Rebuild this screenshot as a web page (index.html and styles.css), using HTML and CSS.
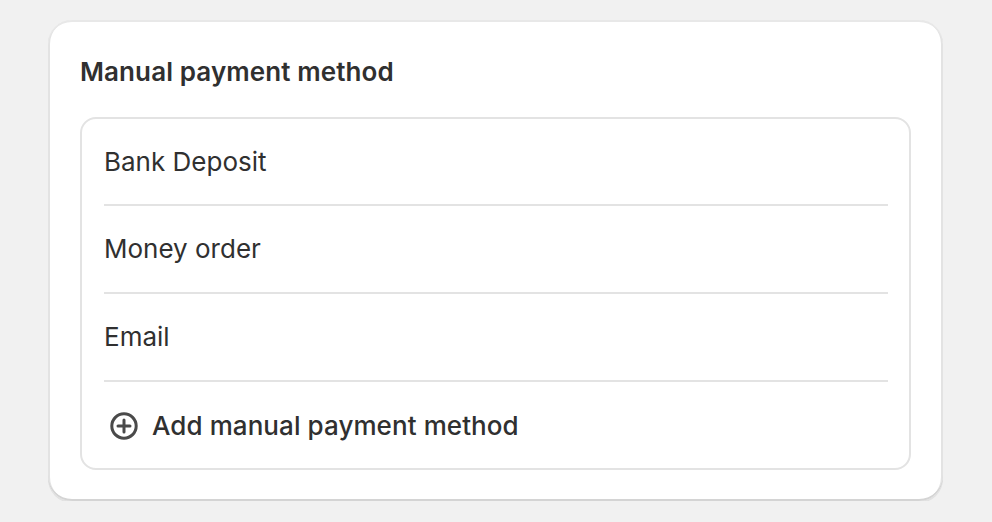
FILE: index.html
```html
<!DOCTYPE html>
<html lang="en">
<head>
<meta charset="utf-8">
<title>Manual payment method</title>
<link rel="stylesheet" href="styles.css">
</head>
<body>
<div class="page">
  <section class="card">
    <h2 class="card-title">Manual payment method</h2>
    <div class="list">
      <div class="row"><span class="row-text">Bank Deposit</span></div>
      <div class="row"><span class="row-text">Money order</span></div>
      <div class="row"><span class="row-text">Email</span></div>
      <div class="row row-add">
        <span class="icon">
          <svg viewBox="0 0 20 20" width="40" height="40" aria-hidden="true">
            <circle cx="10" cy="10" r="6.1" fill="none" stroke="#4a4a4a" stroke-width="1.5"/>
            <path d="M7 10h6M10 7v6" stroke="#4a4a4a" stroke-width="1.5" stroke-linecap="round" fill="none"/>
          </svg>
        </span>
        <span class="add-text">Add manual payment method</span>
      </div>
    </div>
  </section>
</div>
</body>
</html>
```
FILE: styles.css
```css
html, body {
  margin: 0;
  padding: 0;
  background: #f1f1f1;
}
body {
  font-family: Inter, "Noto Sans", sans-serif;
  color: #303030;
}
.page {
  padding: 20px 49px 0 48px;
}
.card {
  background: #ffffff;
  border-radius: 24px;
  padding: 32px 32px 31px 32px;
  box-shadow:
    0 2px 0 0 rgba(26, 26, 26, 0.07),
    inset 0 -2px 0 0 #d4d4d4,
    inset 0 2px 0 0 #e8e8e8,
    inset 2px 0 0 0 #e3e3e3,
    inset -2px 0 0 0 #e3e3e3;
}
.card-title {
  margin: 0 0 25px 0;
  font-size: 26px;
  line-height: 40px;
  font-weight: 600;
  letter-spacing: 0.1px;
  color: #303030;
}
.list {
  border: 2px solid #e3e3e3;
  border-radius: 16px;
  padding: 0 21px 0 22px;
}
.row {
  display: flex;
  align-items: center;
  height: 86px;
  border-bottom: 2px solid #e3e3e3;
}
.row:first-child {
  height: 85px;
}
.row-text {
  font-size: 26px;
  line-height: 40px;
  font-weight: 400;
}
.row-add {
  border-bottom: none;
  height: 84px;
  gap: 8px;
  padding-top: 2px;
}
.icon {
  display: flex;
  width: 40px;
  height: 40px;
}
.add-text {
  font-size: 26px;
  line-height: 40px;
  font-weight: 500;
  letter-spacing: 0.08px;
}
```
